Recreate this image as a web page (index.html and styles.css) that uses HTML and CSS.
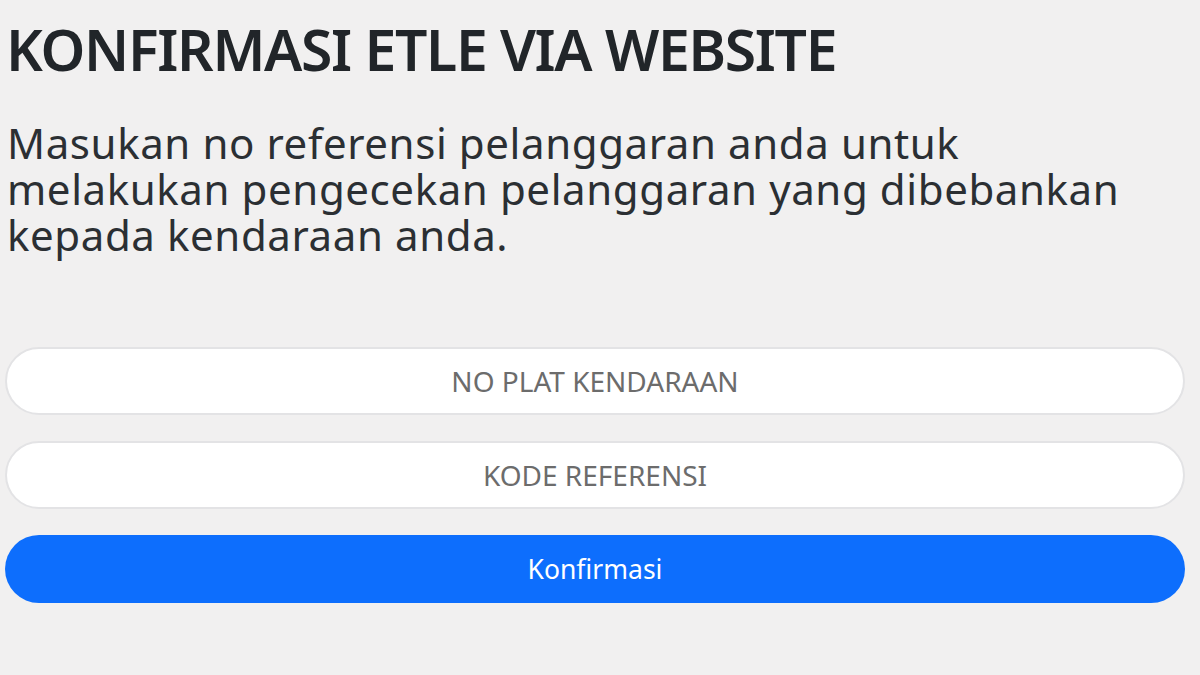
FILE: index.html
```html
<!DOCTYPE html>
<html lang="id">
<head>
  <meta charset="UTF-8">
  <meta name="viewport" content="width=device-width, initial-scale=1.0">
  <title>Konfirmasi ETLE</title>
  <link rel="stylesheet" href="styles.css">
</head>
<body>
<div class="container">
  <h1>KONFIRMASI ETLE VIA WEBSITE</h1>
  <p class="lead">Masukan no referensi pelanggaran anda untuk melakukan pengecekan pelanggaran yang dibebankan kepada kendaraan anda.</p>
  <form class="confirm-form">
    <input type="text" class="field" placeholder="NO PLAT KENDARAAN">
    <input type="text" class="field" placeholder="KODE REFERENSI">
    <button type="submit" class="button-confirm">Konfirmasi</button>
  </form>
</div>
</body>
</html>
```

FILE: styles.css
```css
body {
  margin: 0;
  background-color: #f1f0f0;
  font-family: "Noto Sans", "Open Sans", sans-serif;
  color: #212529;
}

.container {
  padding: 10px 15px 0 5px;
}

h1 {
  margin: 0 0 0 1px;
  font-size: 57px;
  font-weight: 600;
  line-height: 78px;
  letter-spacing: -1.3px;
}

.lead {
  margin: 32px 0 0 2px;
  font-size: 42px;
  line-height: 46px;
  letter-spacing: 0.6px;
  color: #2b2f33;
}

.confirm-form {
  display: flex;
  flex-direction: column;
  gap: 26px;
  margin-top: 89px;
}

.field {
  height: 68px;
  border: 2px solid #e3e3e5;
  border-radius: 34px;
  background: #fff;
  box-sizing: border-box;
  text-align: center;
  font-family: inherit;
  font-size: 28px;
}

.field::placeholder {
  color: #6c6c6c;
}

.button-confirm {
  height: 68px;
  border: none;
  border-radius: 34px;
  background-color: #0d6efd;
  color: #fff;
  font-family: inherit;
  font-size: 26.5px;
}
```
